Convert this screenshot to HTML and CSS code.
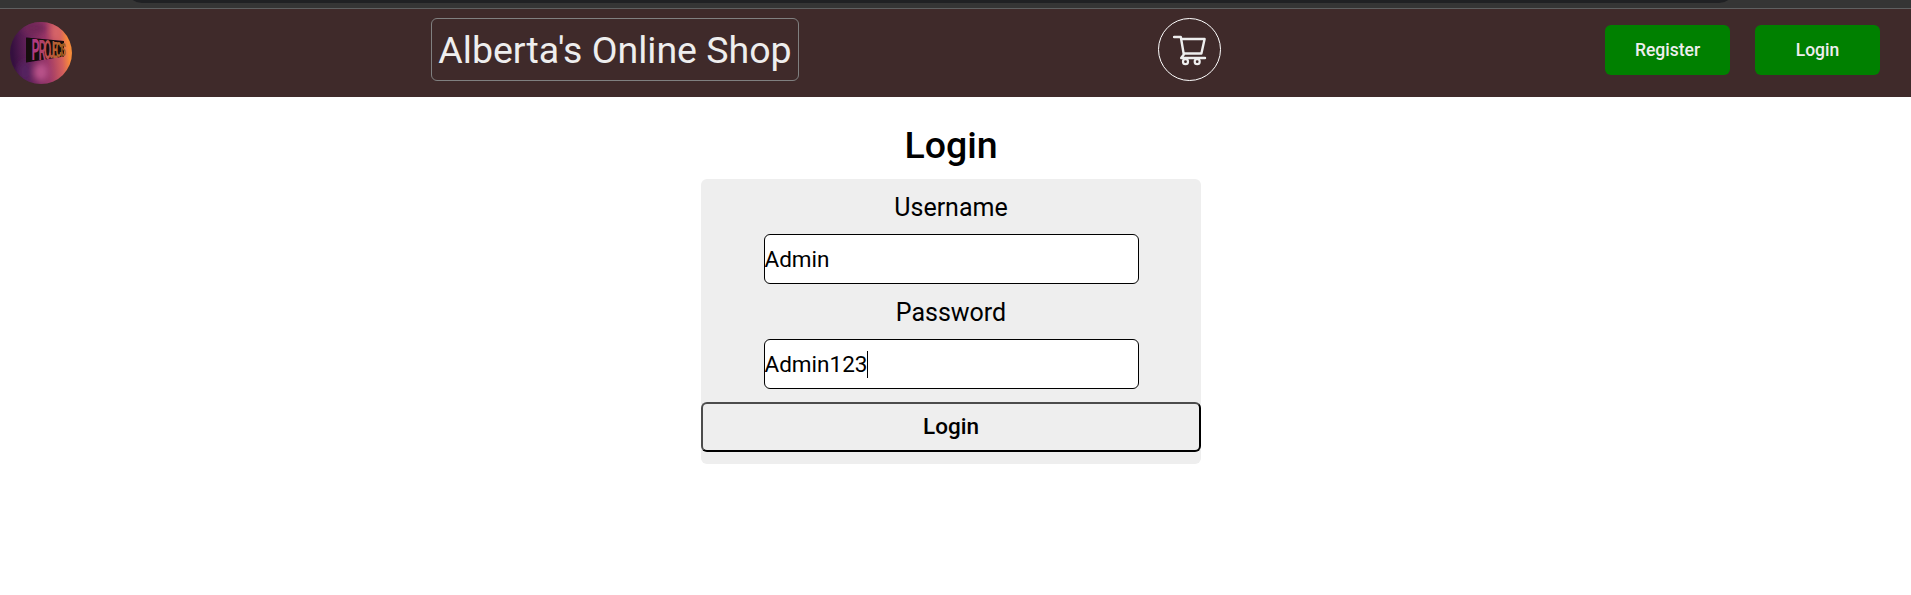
FILE: index.html
```html
<!DOCTYPE html>
<html lang="en">
<head>
<meta charset="utf-8">
<title>Alberta's Online Shop</title>
<link rel="stylesheet" href="styles.css">
</head>
<body>
<div class="browser-edge"><div class="address-bar"></div></div>
<header class="navbar">
  <svg class="logo" viewBox="0 0 62 62">
    <defs>
      <linearGradient id="glow" x1="0" y1="0.1" x2="1" y2="0">
        <stop offset="0" stop-color="#35103f"/>
        <stop offset="0.25" stop-color="#64225a"/>
        <stop offset="0.55" stop-color="#9b3768"/>
        <stop offset="0.78" stop-color="#d45f5c"/>
        <stop offset="0.9" stop-color="#f88a3c"/>
        <stop offset="1" stop-color="#ee8a35"/>
      </linearGradient>
      <clipPath id="disc"><circle cx="31" cy="31" r="31"/></clipPath>
      <filter id="soft"><feGaussianBlur stdDeviation="3"/></filter>
      <filter id="edge"><feGaussianBlur stdDeviation="0.6"/></filter>
    </defs>
    <g clip-path="url(#disc)">
      <rect width="62" height="62" fill="url(#glow)"/>
      <g filter="url(#soft)">
        <ellipse cx="31" cy="50" rx="7" ry="9" fill="#b9528a"/>
        <ellipse cx="15" cy="50" rx="7" ry="11" fill="#552060"/>
        <ellipse cx="24" cy="6" rx="12" ry="6" fill="#702856"/>
        <ellipse cx="46" cy="10" rx="4" ry="10" fill="#d9686a"/>
      </g>
      <path d="M16 15.500L54 19V34.500L16 40.500Z" fill="#120810" filter="url(#edge)"/>
      <text class="logo-text" transform="scale(0.42 1)"><tspan x="51" y="38.500" font-size="30" fill="#b13a80">P</tspan><tspan x="68" y="37.800" font-size="28" fill="#b04068">R</tspan><tspan x="81" y="37" font-size="25" fill="#bb5050">O</tspan><tspan x="93" y="36.500" font-size="24" fill="#b95840">J</tspan><tspan x="101" y="36" font-size="22" fill="#b86035">E</tspan><tspan x="109" y="35.400" font-size="21" fill="#b8662d">C</tspan><tspan x="117" y="34.600" font-size="19" fill="#a86022">T</tspan><tspan x="122" y="34" font-size="18" fill="#9b5a20">S</tspan></text>
    </g>
  </svg>
  <a class="brand">Alberta's Online Shop</a>
  <a class="cart">
    <svg class="cart-icon" viewBox="0 0 34 32" fill="none" stroke="#eee">
      <path d="M1 3H7.800L10.800 20.500L8.200 24H32" stroke-width="2.400" stroke-linejoin="round" stroke-linecap="round"/>
      <path d="M8.600 5H31.600L28.400 19.500H10.800" stroke-width="2.400" stroke-linejoin="round"/>
      <circle cx="12.500" cy="27.700" r="2.500" stroke-width="2.200"/>
      <circle cx="24.200" cy="27.700" r="2.500" stroke-width="2.200"/>
    </svg>
  </a>
  <nav class="actions">
    <button class="action">Register</button>
    <button class="action">Login</button>
  </nav>
</header>
<main class="page">
  <h1 class="heading">Login</h1>
  <form class="login-form">
    <label class="label">Username</label>
    <div class="field">Admin</div>
    <label class="label">Password</label>
    <div class="field">Admin123<span class="caret"></span></div>
    <button class="submit" type="button">Login</button>
  </form>
</main>
</body>
</html>
```
FILE: styles.css
```css
* { box-sizing: border-box; }
body { margin: 0; background: #fff; font-family: Roboto, sans-serif; color: #000; }
.browser-edge { height: 9px; overflow: hidden; background: #353535; border-bottom: 1px solid #5f6061; }
.address-bar { height: 32px; margin: -29px 176px 0 126px; background: #202124; border-radius: 16px; }
.navbar { display: flex; align-items: flex-start; height: 88px; padding: 9px 31px 0 10px; background: #3f2a2a; }
.logo { width: 62px; height: 62px; margin-top: 4px; flex: none; }
.logo-text { font-family: Roboto, sans-serif; font-weight: 700; }
.brand { display: flex; align-items: center; justify-content: center; width: 368px; height: 63px; margin-left: 359px; border: 1px solid #808080; border-radius: 6px; color: #eee; font-size: 37.5px; white-space: nowrap; }
.cart { display: flex; width: 63px; height: 63px; margin-left: 359px; padding: 15px 0 0 14px; border: 1.250px solid #fff; border-radius: 50%; }
.cart-icon { width: 34px; height: 32px; }
.actions { display: flex; gap: 25px; margin: 7px 0 0 auto; }
.action { width: 125px; height: 50px; padding: 0 0 1px; border: 0; border-radius: 6px; background: #008000; color: #eee; font: 500 17.5px Roboto, sans-serif; }
.page { width: 500px; margin: 0 0 0 701px; padding-top: 25px; }
.heading { margin: 0; height: 57px; font-size: 37.5px; font-weight: 500; line-height: 47px; text-align: center; }
.login-form { display: flex; flex-direction: column; align-items: center; height: 285px; background: #eee; border-radius: 6px; }
.label { height: 55px; padding-top: 1px; font-size: 25px; line-height: 55px; }
.field { display: flex; align-items: center; width: 375px; height: 50px; border: 1px solid #000; border-radius: 6px; background: #fff; font-size: 22.5px; }
.caret { width: 1px; height: 27px; background: #000; }
.submit { width: 500px; height: 50px; margin-top: 13px; padding: 0 0 2px; border: 2px solid; border-color: #4c4c4c #000 #000 #4c4c4c; border-radius: 6px; background: #eee; color: #000; font: 500 22.5px Roboto, sans-serif; }
```
